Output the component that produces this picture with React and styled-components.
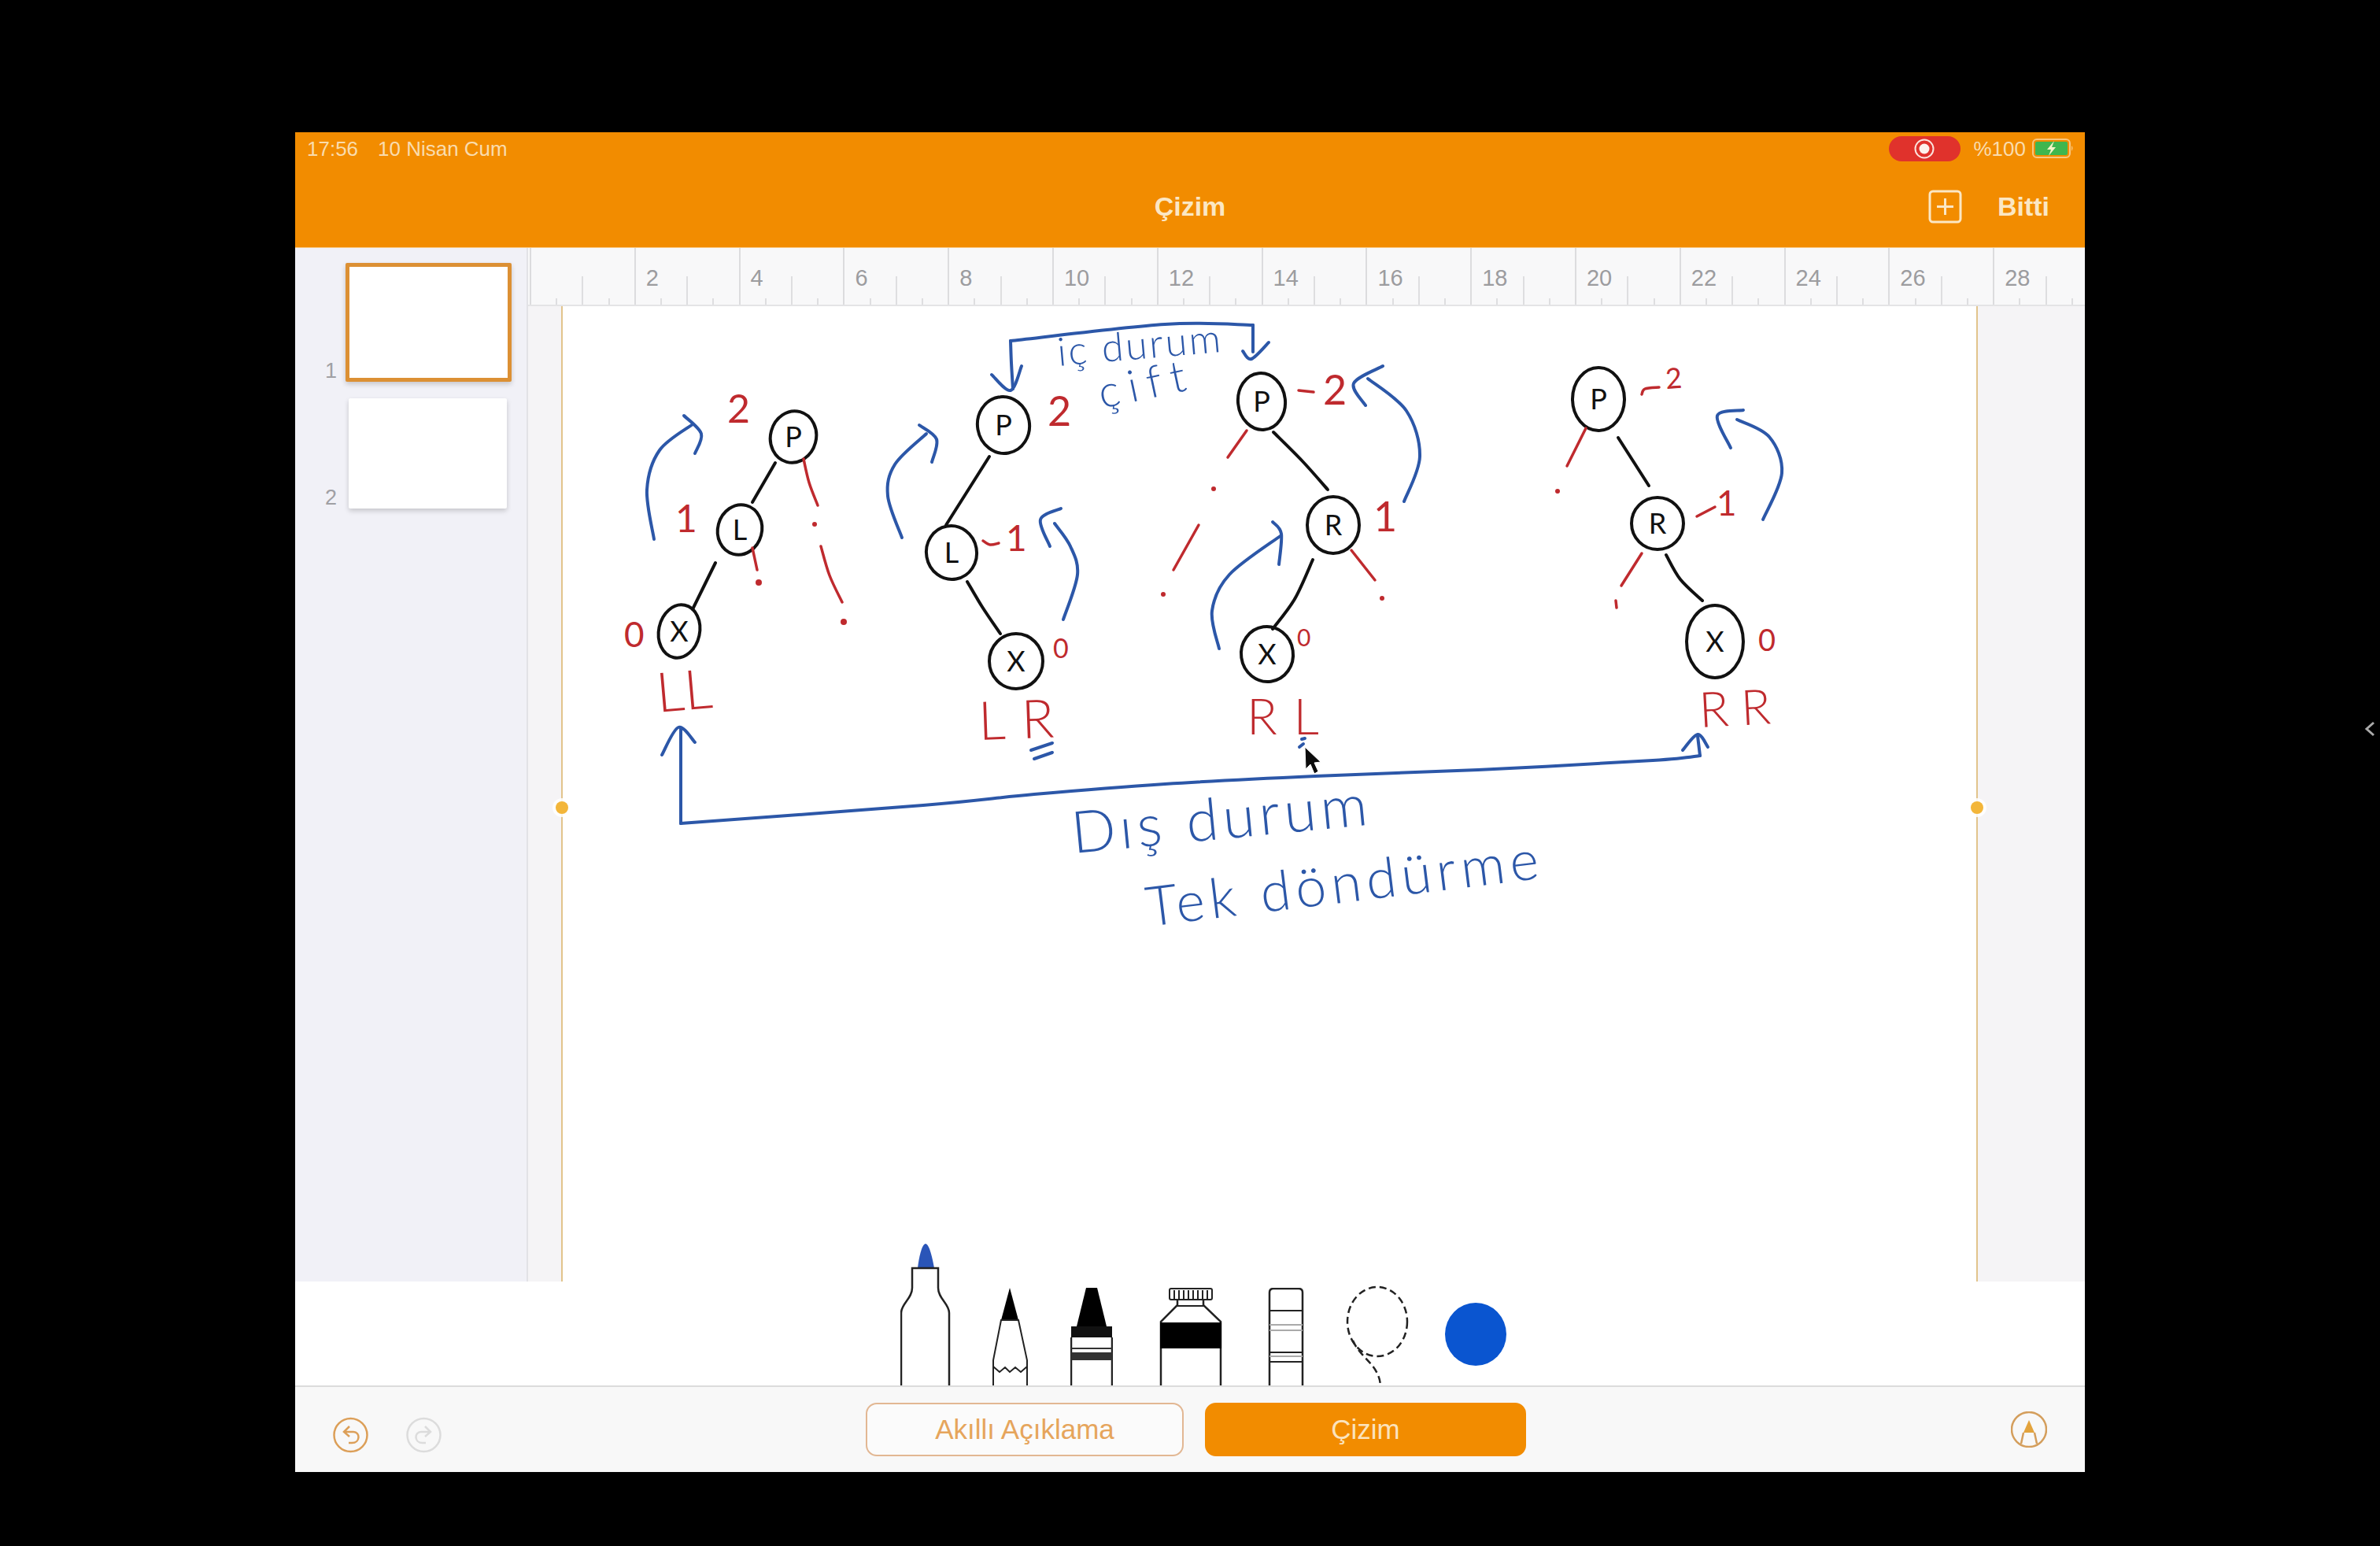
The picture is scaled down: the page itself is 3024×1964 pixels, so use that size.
import styled, { createGlobalStyle } from "styled-components";

const GlobalStyle = createGlobalStyle`
  html, body {
    margin: 0;
    background: #000;
    font-family: "Liberation Sans", Arial, sans-serif;
  }
`;

const Screen = styled.div`
  position: relative;
  width: 3024px;
  height: 1964px;
  padding: 168px 0 0 375px;
  box-sizing: border-box;
  background: #000;
  overflow: hidden;
`;

const Tablet = styled.div`
  width: 2274px;
  height: 1702px;
  display: flex;
  flex-direction: column;
  background: #f1f1f7;
`;

const Header = styled.header`
  height: 147px;
  flex: none;
  background: #f28c00;
  color: #fbe7c4;
  display: flex;
  flex-direction: column;
  border-bottom: 1px solid #f9c77e;
  box-sizing: border-box;
`;

const StatusBar = styled.div`
  height: 42px;
  padding: 0 13px 0 15px;
  display: flex;
  align-items: center;
  font-size: 26px;
  color: #f9dcae;
`;

const Clock = styled.span`
  width: 90px;
`;

const RecordPill = styled.div`
  width: 91px;
  height: 32px;
  margin-left: auto;
  border-radius: 16px;
  background: #e0322c;
  display: flex;
  align-items: center;
  justify-content: center;
`;

const BatteryText = styled.span`
  margin: 0 8px 0 17px;
`;

const TitleBar = styled.div`
  flex: 1;
  display: grid;
  grid-template-columns: 1fr auto 1fr;
  align-items: center;
`;

const Title = styled.div`
  font-size: 34px;
  font-weight: 700;
`;

const TitleActions = styled.div`
  display: flex;
  align-items: center;
  justify-content: flex-end;
  gap: 45px;
  padding-right: 45px;
  font-size: 34px;
  font-weight: 700;
`;

const Workspace = styled.div`
  flex: 1;
  min-height: 0;
  display: grid;
  grid-template-columns: 296px minmax(0, 1fr);
`;

const Sidebar = styled.aside`
  border-right: 2px solid #e2e2e6;
  padding: 19px 0 0 37px;
  box-sizing: border-box;
  display: flex;
  flex-direction: column;
  gap: 21px;
`;

const SlideRow = styled.div`
  display: flex;
  align-items: flex-end;
  gap: 10px;
`;

const SlideNumber = styled.span`
  width: 17px;
  color: #a0a0a4;
  font-size: 27px;
  line-height: 28px;
  text-align: center;
`;

const Slide = styled.div`
  width: 201px;
  height: ${(p) => (p.$active ? "141px" : "140px")};
  background: #fff;
  margin-left: ${(p) => (p.$active ? "0" : "4px")};
  border: ${(p) => (p.$active ? "5px solid #dc9034" : "0")};
  border-radius: 2px;
  box-shadow: 0 3px 6px rgba(0, 0, 0, 0.18);
`;

const CanvasColumn = styled.div`
  display: flex;
  flex-direction: column;
  min-height: 0;
  min-width: 0;
`;

const Ruler = styled.div`
  height: 74px;
  flex: none;
  display: flex;
  padding-left: 2px;
  overflow: hidden;
  background: #f8f8f9;
  border-bottom: 2px solid #e4e4e6;
  box-sizing: border-box;
`;

// one cell is two ruler units: a full line, a half line and two small ticks
const RulerCell = styled.div`
  flex: none;
  width: 132.8px;
  height: 100%;
  box-sizing: border-box;
  padding: 22px 0 0 15px;
  color: #9c9c9f;
  font-size: 29px;
  line-height: 32px;
  background:
    linear-gradient(#dcdcde, #dcdcde) 0 0 / 2px 100% no-repeat,
    linear-gradient(#dedee0, #dedee0) 66.4px 100% / 2px 36px no-repeat,
    linear-gradient(#dedee0, #dedee0) 33.2px 100% / 2px 8px no-repeat,
    linear-gradient(#dedee0, #dedee0) 99.6px 100% / 2px 8px no-repeat;
`;

const PageArea = styled.div`
  flex: 1;
  min-height: 0;
  padding: 0 137px 0 43px;
  background: #f5f4f6;
`;

const Page = styled.div`
  position: relative;
  height: 100%;
  background: #fff;
  border-left: 2px solid #e2c48c;
  border-right: 2px solid #e2c48c;
  margin: 0 -1px;
`;

const Handle = styled.span`
  position: absolute;
  top: 629px;
  ${(p) => (p.$side === "left" ? "left: -9px;" : "right: -9px;")}
  width: 16px;
  height: 16px;
  border-radius: 50%;
  background: #f3b63a;
  box-shadow: 0 0 0 4px rgba(255, 255, 255, 0.85);
`;

const Sketch = styled.svg`
  position: absolute;
  left: 0;
  top: 0;
  width: 1798px;
  height: 1238px;
  overflow: visible;
`;

const Ink = styled.text`
  font-family: "Lato", "Liberation Sans", sans-serif;
  font-weight: ${(p) => p.$weight || 400};
  font-variant-ligatures: none;
`;

const Toolbar = styled.div`
  position: relative;
  z-index: 1;
  height: 134px;
  flex: none;
  background: #fff;
  padding-left: 769px;
  display: flex;
  align-items: flex-end;
  border-bottom: 2px solid #dcdcdc;
  box-sizing: border-box;
`;

const Tool = styled.svg`
  flex: none;
  display: block;
  margin-left: ${(p) => p.$gap || 0}px;
  margin-bottom: ${(p) => p.$lift || 0}px;
`;

const BottomBar = styled.div`
  height: 108px;
  flex: none;
  background: #f8f8f8;
  display: grid;
  grid-template-columns: 725px auto 1fr;
  align-items: center;
`;

const HistoryGroup = styled.div`
  display: flex;
  gap: 48px;
  padding: 14px 0 0 48px;
`;

const ModeGroup = styled.div`
  display: flex;
  gap: 27px;
`;

const ModeButton = styled.div`
  width: ${(p) => (p.$active ? "408px" : "404px")};
  height: 68px;
  box-sizing: border-box;
  border-radius: 14px;
  border: 2px solid ${(p) => (p.$active ? "#f28c00" : "#e2b793")};
  background: ${(p) => (p.$active ? "#f28c00" : "#fbfbfb")};
  color: ${(p) => (p.$active ? "#fbe3bd" : "#e6a55c")};
  font-size: 35px;
  display: flex;
  align-items: center;
  justify-content: center;
`;

const PencilButton = styled.div`
  justify-self: end;
  padding-right: 48px;
  display: flex;
`;

const SideChevron = styled.svg`
  position: absolute;
  left: 3003px;
  top: 914px;
`;

const BLUE = "#2c57a8";
const RED = "#bf2a2e";
const BLACK = "#111";

// smooth line through hand-picked points, so strokes read like pen ink
function inkPath(points) {
  let d = `M${points[0][0]} ${points[0][1]}`;
  for (let i = 0; i < points.length - 1; i++) {
    const p0 = points[i - 1] || points[i];
    const p1 = points[i];
    const p2 = points[i + 1];
    const p3 = points[i + 2] || p2;
    const c1 = [p1[0] + (p2[0] - p0[0]) / 6, p1[1] + (p2[1] - p0[1]) / 6];
    const c2 = [p2[0] - (p3[0] - p1[0]) / 6, p2[1] - (p3[1] - p1[1]) / 6];
    d += ` C${c1[0]} ${c1[1]} ${c2[0]} ${c2[1]} ${p2[0]} ${p2[1]}`;
  }
  return d;
}

const nodes = [
  { x: 1008, y: 554, rx: 29, ry: 33, tilt: 15, label: "P" },
  { x: 940, y: 672, rx: 28, ry: 32, tilt: 15, label: "L" },
  { x: 863, y: 801, rx: 26, ry: 34, tilt: 12, label: "X" },
  { x: 1275, y: 539, rx: 33, ry: 36, tilt: -10, label: "P" },
  { x: 1209, y: 701, rx: 32, ry: 34, tilt: -10, label: "L" },
  { x: 1291, y: 839, rx: 34, ry: 35, tilt: 0, label: "X" },
  { x: 1603, y: 509, rx: 30, ry: 36, tilt: -6, label: "P" },
  { x: 1694, y: 666, rx: 33, ry: 36, tilt: 0, label: "R" },
  { x: 1610, y: 830, rx: 33, ry: 35, tilt: -8, label: "X" },
  { x: 2031, y: 506, rx: 33, ry: 40, tilt: 0, label: "P" },
  { x: 2106, y: 664, rx: 33, ry: 33, tilt: 0, label: "R" },
  { x: 2179, y: 814, rx: 36, ry: 46, tilt: 0, label: "X" },
];

const blackLines = [
  [[985, 587], [956, 637]],
  [[909, 714], [880, 773]],
  [[1257, 579], [1202, 666]],
  [[1229, 738], [1248, 770], [1271, 804]],
  [[1618, 548], [1655, 585], [1687, 621]],
  [[1668, 710], [1645, 760], [1617, 798]],
  [[2056, 555], [2095, 616]],
  [[2117, 704], [2135, 735], [2163, 762]],
];

const redLines = [
  [[1021, 582], [1028, 612], [1039, 641]],
  [[1043, 693], [1054, 730], [1070, 764]],
  [[956, 695], [962, 723]],
  [[1584, 546], [1560, 580]],
  [[1523, 666], [1491, 723]],
  [[1717, 698], [1747, 736]],
  [[2015, 543], [1991, 591]],
  [[2086, 702], [2060, 743]],
  [[2053, 762], [2054, 771]],
  [[1249, 686], [1258, 691], [1269, 689]],
  [[1650, 495], [1669, 497]],
  [[2086, 500], [2090, 493], [2108, 491]],
  [[2156, 655], [2179, 643]],
];

const redDots = [
  [1035, 665, 3], [1072, 789, 4], [964, 739, 4], [1542, 620, 3],
  [1478, 754, 3], [1756, 759, 3], [1979, 623, 3],
];

const blueLines = [
  // rotation arrows
  [[831, 684], [822, 621], [838, 571], [880, 538]],
  [[869, 527], [891, 550], [883, 575]],
  [[1146, 682], [1128, 629], [1137, 589], [1177, 550]],
  [[1168, 539], [1190, 557], [1184, 586]],
  [[1351, 786], [1369, 729], [1360, 693], [1340, 664]],
  [[1348, 645], [1322, 659], [1334, 693]],
  [[1784, 636], [1804, 579], [1787, 521], [1738, 480]],
  [[1757, 464], [1720, 486], [1735, 514]],
  [[1549, 823], [1540, 775], [1562, 729], [1628, 679]],
  [[1617, 662], [1628, 677], [1625, 716]],
  [[2240, 659], [2264, 600], [2248, 554], [2207, 532]],
  [[2215, 520], [2182, 527], [2199, 568]],
  // top bracket
  [[1287, 493], [1285, 460], [1284, 432]],
  [[1284, 432], [1480, 411], [1592, 412]],
  [[1592, 412], [1592, 446]],
  [[1260, 475], [1284, 495], [1298, 464]],
  [[1579, 445], [1590, 455], [1612, 434]],
  // bottom bracket
  [[865, 925], [865, 1045]],
  [[865, 1045], [1173, 1022], [1314, 1008], [1480, 995], [1671, 985], [1878, 977], [2100, 965], [2160, 959]],
  [[2160, 959], [2157, 934]],
  [[841, 958], [862, 923], [883, 942]],
  [[2138, 952], [2157, 932], [2170, 948]],
  // marks under LR and RL
  [[1310, 952], [1337, 943]],
  [[1314, 963], [1337, 955]],
  [[1654, 938], [1658, 937]],
  [[1651, 948], [1656, 944]],
];

const inkTexts = [
  { text: "2", x: 924, y: 536, size: 50, fill: RED, rotate: 0 },
  { text: "1", x: 858, y: 675, size: 48, fill: RED, rotate: 0 },
  { text: "0", x: 793, y: 821, size: 44, fill: RED, rotate: 0 },
  { text: "2", x: 1331, y: 540, size: 52, fill: RED, rotate: 0 },
  { text: "1", x: 1278, y: 699, size: 46, fill: RED, rotate: 0 },
  { text: "0", x: 1338, y: 835, size: 34, fill: RED, rotate: 0 },
  { text: "2", x: 1681, y: 513, size: 52, fill: RED, rotate: 0 },
  { text: "1", x: 1745, y: 674, size: 52, fill: RED, rotate: 0 },
  { text: "0", x: 1648, y: 820, size: 30, fill: RED, rotate: 0 },
  { text: "2", x: 2117, y: 493, size: 36, fill: RED, rotate: -4 },
  { text: "1", x: 2181, y: 654, size: 44, fill: RED, rotate: 0 },
  { text: "0", x: 2234, y: 826, size: 38, fill: RED, rotate: 0 },
  { text: "LL", x: 836, y: 904, w: 71, size: 70, fill: RED, rotate: -5, weight: 300 },
  { text: "LR", x: 1244, y: 939, w: 96, size: 68, fill: RED, rotate: -2, weight: 300 },
  { text: "RL", x: 1584, y: 932, w: 92, size: 64, fill: RED, rotate: 0, weight: 300 },
  { text: "RR", x: 2160, y: 923, w: 91, size: 62, fill: RED, rotate: -3, weight: 300 },
  { text: "iç durum", x: 1345, y: 464, w: 208, size: 50, fill: BLUE, rotate: -5, weight: 300 },
  { text: "çift", x: 1400, y: 518, w: 112, size: 56, fill: BLUE, rotate: -12, weight: 300 },
  { text: "Dış durum", x: 1364, y: 1083, w: 377, size: 74, fill: BLUE, rotate: -5.5, weight: 300 },
  { text: "Tek döndürme", x: 1459, y: 1176, w: 502, size: 70, fill: BLUE, rotate: -7, weight: 300 },
];

const rulerLabels = [null, 2, 4, 6, 8, 10, 12, 14, 16, 18, 20, 22, 24, 26, 28];

function DrawingLayer() {
  return (
    <Sketch viewBox="715 388 1798 1238">
      <g fill="none" strokeLinecap="round" strokeLinejoin="round">
        {nodes.map((n, i) => (
          <ellipse
            key={i}
            cx={n.x}
            cy={n.y}
            rx={n.rx}
            ry={n.ry}
            stroke={BLACK}
            strokeWidth="4"
            transform={`rotate(${n.tilt} ${n.x} ${n.y})`}
          />
        ))}
        {blackLines.map((pts, i) => (
          <path key={i} d={inkPath(pts)} stroke={BLACK} strokeWidth="4" />
        ))}
        {redLines.map((pts, i) => (
          <path key={i} d={inkPath(pts)} stroke={RED} strokeWidth="3.5" />
        ))}
        {blueLines.map((pts, i) => (
          <path key={i} d={inkPath(pts)} stroke={BLUE} strokeWidth="4" />
        ))}
      </g>
      {redDots.map(([x, y, r], i) => (
        <circle key={i} cx={x} cy={y} r={r} fill={RED} />
      ))}
      {nodes.map((n, i) => (
        <Ink
          key={i}
          x={n.x}
          y={n.y + 13}
          fontSize="36"
          fill={BLACK}
          textAnchor="middle"
        >
          {n.label}
        </Ink>
      ))}
      {inkTexts.map((t, i) => (
        <Ink
          key={i}
          x={t.x}
          y={t.y}
          fontSize={t.size}
          fill={t.fill}
          textLength={t.w}
          $weight={t.weight}
          transform={`rotate(${t.rotate} ${t.x} ${t.y})`}
        >
          {t.text}
        </Ink>
      ))}
      <path
        d="M1658 948 L1659 976 L1665 970 L1670 982 L1675 979 L1670 968 L1678 967 Z"
        fill="#0c0c0c"
        stroke="#fff"
        strokeWidth="1"
      />
    </Sketch>
  );
}

function MarkerIcon() {
  return (
    <Tool $gap={0} width="64" height="180" viewBox="0 0 64 180">
      <path d="M22 31 C24 14 28 0 32 0 C36 0 40 14 43 31 Z" fill="#2a55b8" />
      <path
        d="M1 180 V88 C1 76 15 70 15 56 V31 H48 V56 C48 70 62 76 62 88 V180"
        fill="#fff"
        stroke="#222"
        strokeWidth="2.5"
      />
    </Tool>
  );
}

function PencilIcon() {
  return (
    <Tool $gap={53} width="46" height="124" viewBox="0 0 46 124">
      <path d="M22 0 L11 41 H33 Z" fill="#000" />
      <path
        d="M1 124 V92 L11 41 H33 L44 92 V124"
        fill="#fff"
        stroke="#222"
        strokeWidth="2"
      />
      <path d="M1 100 L9 107 L16 101 L22 107 L29 101 L36 107 L44 100" fill="none" stroke="#222" strokeWidth="2" />
    </Tool>
  );
}

function CrayonIcon() {
  return (
    <Tool $gap={53} width="54" height="124" viewBox="0 0 54 124">
      <path d="M20 0 H34 L46 49 H8 Z" fill="#000" />
      <rect x="1" y="49" width="52" height="14" fill="#111" />
      <path d="M1 63 V124 M53 63 V124" stroke="#222" strokeWidth="2.5" />
      <rect x="1" y="76" width="52" height="2" fill="#333" />
      <rect x="1" y="82" width="52" height="10" fill="#333" />
    </Tool>
  );
}

function TubeIcon() {
  return (
    <Tool $gap={59} width="80" height="124" viewBox="0 0 80 124">
      <rect x="13" y="1" width="54" height="14" rx="2" fill="#fff" stroke="#222" strokeWidth="2" />
      <path d="M19 3 V14 M25 3 V14 M31 3 V14 M37 3 V14 M43 3 V14 M49 3 V14 M55 3 V14 M61 3 V14" stroke="#222" strokeWidth="2" />
      <path d="M23 15 V22 L2 43 V124 M56 15 V22 L78 43 V124" fill="none" stroke="#222" strokeWidth="2.5" />
      <path d="M22 23 H57" stroke="#222" strokeWidth="2" />
      <rect x="1" y="44" width="78" height="33" fill="#000" />
    </Tool>
  );
}

function EraserIcon() {
  return (
    <Tool $gap={58} width="46" height="124" viewBox="0 0 46 124">
      <path d="M2 124 V6 Q2 1 7 1 H39 Q44 1 44 6 V124" fill="#fff" stroke="#222" strokeWidth="2.5" />
      <path d="M2 29 H44 M2 82 H44 M2 94 H44" stroke="#222" strokeWidth="2" />
      <path d="M2 47 H44 M2 54 H44 M2 87 H44" stroke="#aaa" strokeWidth="2" />
    </Tool>
  );
}

function LassoIcon() {
  return (
    <Tool $gap={53} width="80" height="127" viewBox="0 0 80 127">
      <ellipse cx="40" cy="46" rx="38" ry="44" fill="none" stroke="#222" strokeWidth="2.5" strokeDasharray="9 5" />
      <path d="M9 70 C18 92 42 100 44 127" fill="none" stroke="#222" strokeWidth="2.5" strokeDasharray="9 5" />
    </Tool>
  );
}

function ColorDot() {
  return (
    <Tool $gap={46} $lift={25} width="78" height="80" viewBox="0 0 78 80">
      <ellipse cx="39" cy="40" rx="39" ry="40" fill="#0a55d0" />
    </Tool>
  );
}

export default function App() {
  return (
    <Screen>
      <GlobalStyle />
      <Tablet>
        <Header>
          <StatusBar>
            <Clock>17:56</Clock>
            <span>10 Nisan Cum</span>
            <RecordPill>
              <svg width="28" height="28" viewBox="0 0 28 28">
                <circle cx="14" cy="14" r="11.5" fill="none" stroke="#fbe3dc" strokeWidth="2" />
                <circle cx="14" cy="14" r="6.5" fill="#fdf2ec" />
              </svg>
            </RecordPill>
            <BatteryText>%100</BatteryText>
            <svg width="54" height="26" viewBox="0 0 54 26">
              <rect x="1" y="1" width="47" height="23" rx="5" fill="none" stroke="#f9c77e" strokeWidth="2" />
              <rect x="4" y="4" width="41" height="17" rx="2" fill="#3fb64e" />
              <path d="M50 9 Q53 12 50 16 Z" fill="#f9c77e" />
              <path d="M28 3 L19 14 H24 L21 22 L30 11 H25 Z" fill="#f5f3c8" />
            </svg>
          </StatusBar>
          <TitleBar>
            <span />
            <Title>Çizim</Title>
            <TitleActions>
              <svg width="43" height="43" viewBox="0 0 43 43" fill="none" stroke="#fbe7c4" strokeWidth="3">
                <rect x="2" y="2" width="39" height="39" rx="4" />
                <path d="M21.5 11 V32 M11 21.5 H32" />
              </svg>
              <span>Bitti</span>
            </TitleActions>
          </TitleBar>
        </Header>

        <Workspace>
          <Sidebar>
            <SlideRow>
              <SlideNumber>1</SlideNumber>
              <Slide $active />
            </SlideRow>
            <SlideRow>
              <SlideNumber>2</SlideNumber>
              <Slide />
            </SlideRow>
          </Sidebar>
          <CanvasColumn>
            <Ruler>
              {rulerLabels.map((n, i) => (
                <RulerCell key={i}>{n}</RulerCell>
              ))}
            </Ruler>
            <PageArea>
              <Page>
                <DrawingLayer />
                <Handle $side="left" />
                <Handle $side="right" />
              </Page>
            </PageArea>
          </CanvasColumn>
        </Workspace>

        <Toolbar>
          <MarkerIcon />
          <PencilIcon />
          <CrayonIcon />
          <TubeIcon />
          <EraserIcon />
          <LassoIcon />
          <ColorDot />
        </Toolbar>

        <BottomBar>
          <HistoryGroup>
            <svg width="45" height="46" viewBox="0 0 45 46" fill="none" stroke="#dc9f58" strokeWidth="2.5">
              <circle cx="22.5" cy="23" r="21" />
              <path d="M21 12 L14 19 L21 25 M14 19 H26 C35 19 35 33 24 33 H20" />
            </svg>
            <svg width="45" height="46" viewBox="0 0 45 46" fill="none" stroke="#dcdcdc" strokeWidth="2.5">
              <circle cx="22.5" cy="23" r="21" />
              <path d="M24 12 L31 19 L24 25 M31 19 H19 C10 19 10 33 21 33 H25" />
            </svg>
          </HistoryGroup>
          <ModeGroup>
            <ModeButton>Akıllı Açıklama</ModeButton>
            <ModeButton $active>Çizim</ModeButton>
          </ModeGroup>
          <PencilButton>
            <svg width="46" height="46" viewBox="0 0 46 46" fill="none">
              <circle cx="23" cy="23" r="22" stroke="#d49e5c" strokeWidth="2.5" />
              <path d="M23 11 L16 27 H30 Z" fill="#e3a33c" />
              <path d="M16 27 L13 41 M30 27 L33 41" stroke="#d49e5c" strokeWidth="2.5" />
            </svg>
          </PencilButton>
        </BottomBar>
      </Tablet>
      <SideChevron width="16" height="24" viewBox="0 0 16 24" fill="none" stroke="#aaa" strokeWidth="3">
        <path d="M13 4 L4 12 L13 20" />
      </SideChevron>
    </Screen>
  );
}
